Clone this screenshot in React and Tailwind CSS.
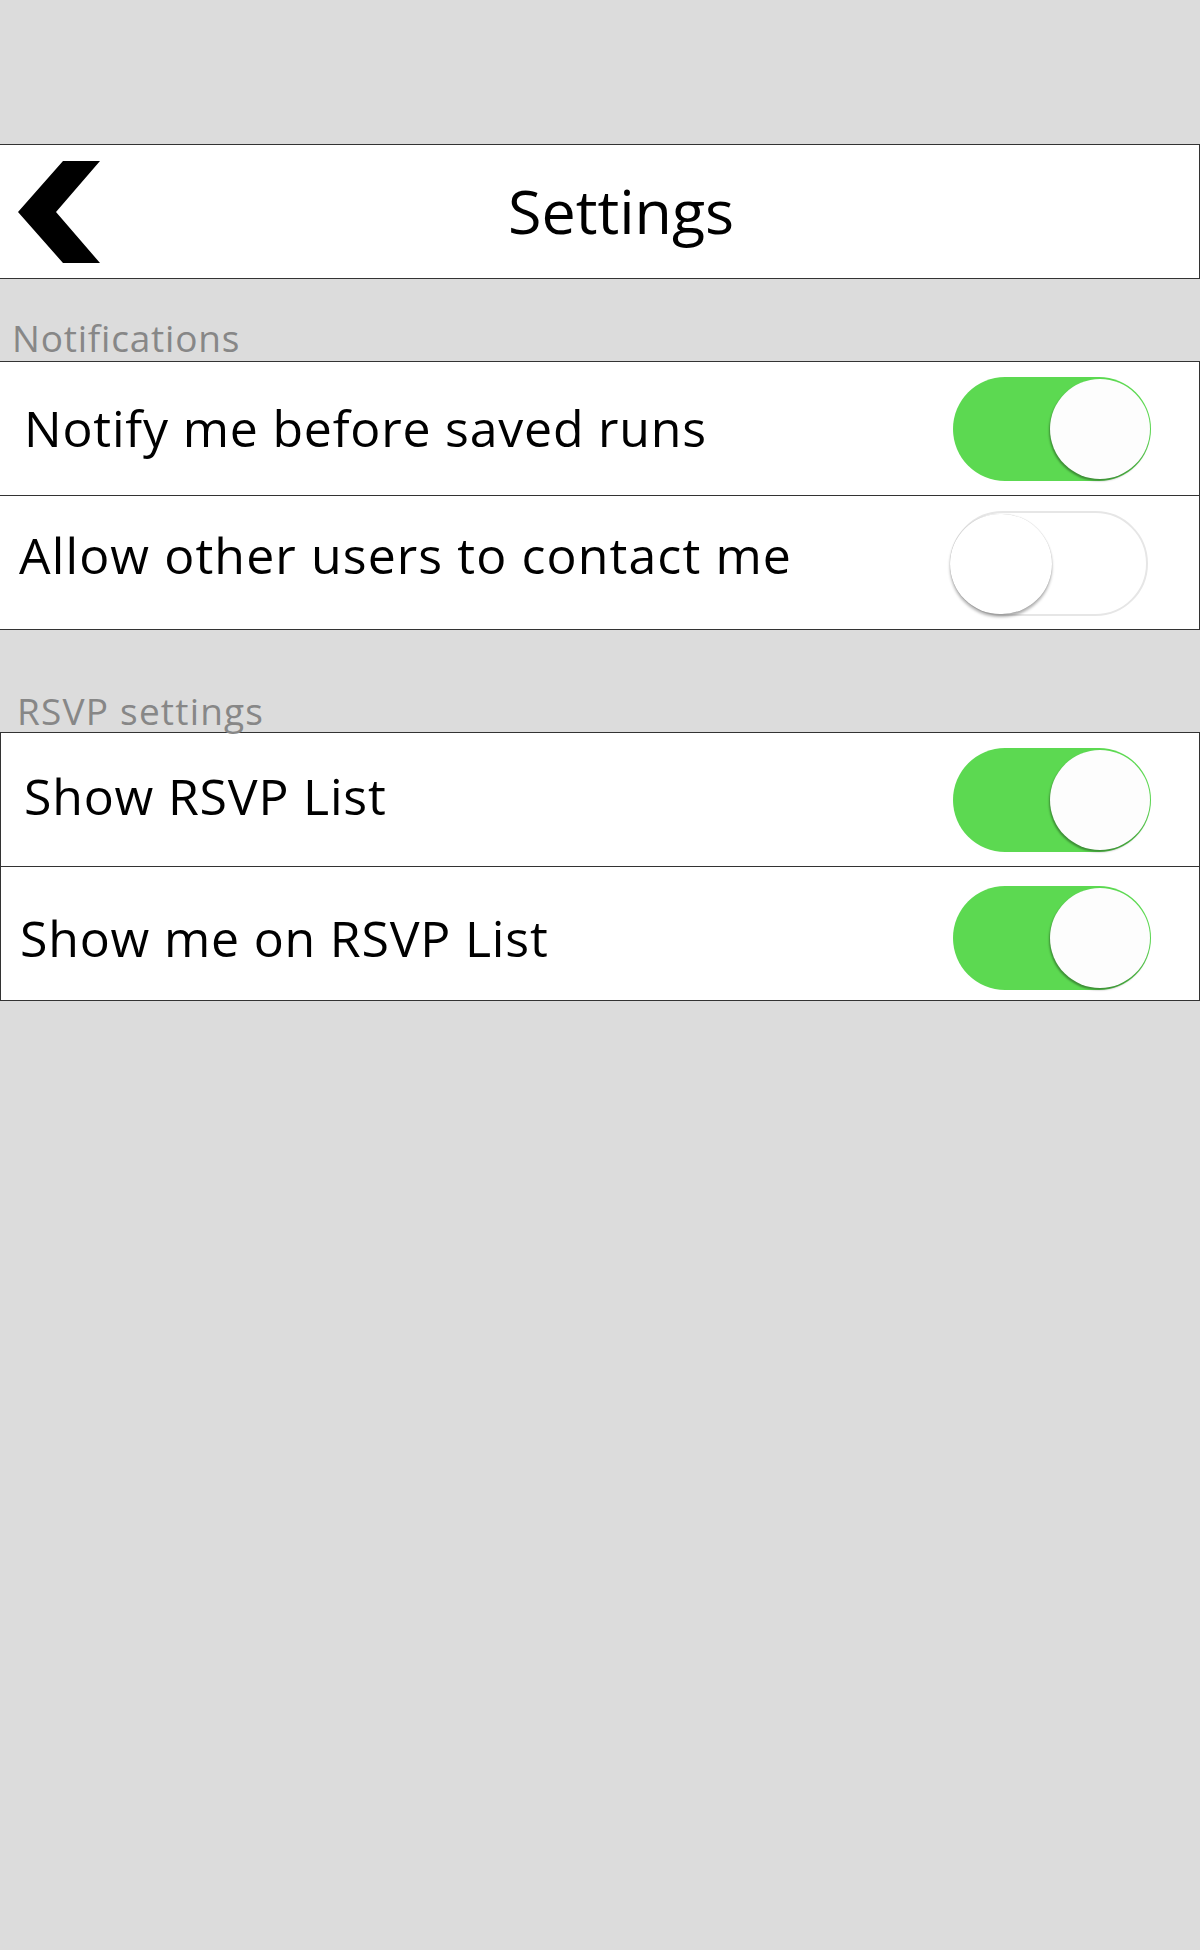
import React from 'react';

function Toggle({ on }) {
    if (on) {
        return (
            <div className="w-[198px] h-[104px] rounded-full bg-[#5cd951] flex items-center justify-end pr-[1px] shrink-0">
                <div className="w-[100px] h-[100px] rounded-full bg-[#fdfdfd] shadow-[-1px_2px_2px_rgba(0,0,0,0.35)]" />
            </div>
        );
    }
    return (
        <div className="w-[198px] h-[105px] rounded-full bg-white border-2 border-[#e6e6e6] flex items-center shrink-0">
            <div className="w-[102px] h-[100px] rounded-full bg-white -ml-[2px] shadow-[0_3px_3px_rgba(0,0,0,0.3),0_0_1px_rgba(0,0,0,0.25)]" />
        </div>
    );
}

function Row({ label, on, textPad, togglePad, border, tracking = 'tracking-[0.8px]' }) {
    return (
        <div className={`h-[134px] bg-white flex items-center justify-between border-[#333] ${border}`}>
            <span className={`text-[50px] text-black ${tracking} ${textPad}`}>{label}</span>
            <div className={togglePad}>
                <Toggle on={on} />
            </div>
        </div>
    );
}

export default function App() {
    return (
        <div className="w-[1200px] min-h-[1950px] bg-[#dcdcdc]" style={{ fontFamily: '"Open Sans", "Noto Sans", sans-serif' }}>
            <div className="h-[144px]" />

            {/* Header */}
            <div className="h-[135px] bg-white border-y border-r border-[#333] flex items-center">
                <svg width="82" height="102" viewBox="0 0 82 102" className="ml-[18px] shrink-0">
                    <polygon points="45,0 82,0 38,51 82,102 45,102 0,51" fill="#000" />
                </svg>
                <h1 className="ml-[408px] text-[61px] font-normal text-black leading-none pb-[2px]">Settings</h1>
            </div>

            {/* Notifications */}
            <div className="h-[82px] flex items-end pl-[12px] pb-[5px]">
                <span className="text-[37px] text-[#878787] leading-none tracking-[0.8px]">Notifications</span>
            </div>
            <div className="border-t border-[#333]">
                <Row label="Notify me before saved runs" on textPad="pl-[24px]" togglePad="pr-[48px]" border="border-r border-b" />
                <Row label="Allow other users to contact me" on={false} tracking="tracking-[1.1px]" textPad="pl-[19px] pb-[14px]" togglePad="pr-[51px] pt-[2px]" border="border-r border-b" />
            </div>

            {/* RSVP settings */}
            <div className="h-[102px] flex items-end pl-[17px] pb-[3px]">
                <span className="text-[37px] text-[#878787] leading-none tracking-[1.2px]">RSVP settings</span>
            </div>
            <div className="border-t border-[#333]">
                <Row label="Show RSVP List" on textPad="pl-[23px] pb-[6px]" togglePad="pr-[48px]" border="border-x border-b" />
                <Row label="Show me on RSVP List" on textPad="pl-[19px] pt-[10px]" togglePad="pr-[48px] pt-[8px]" border="border-x border-b" />
            </div>
        </div>
    );
}
